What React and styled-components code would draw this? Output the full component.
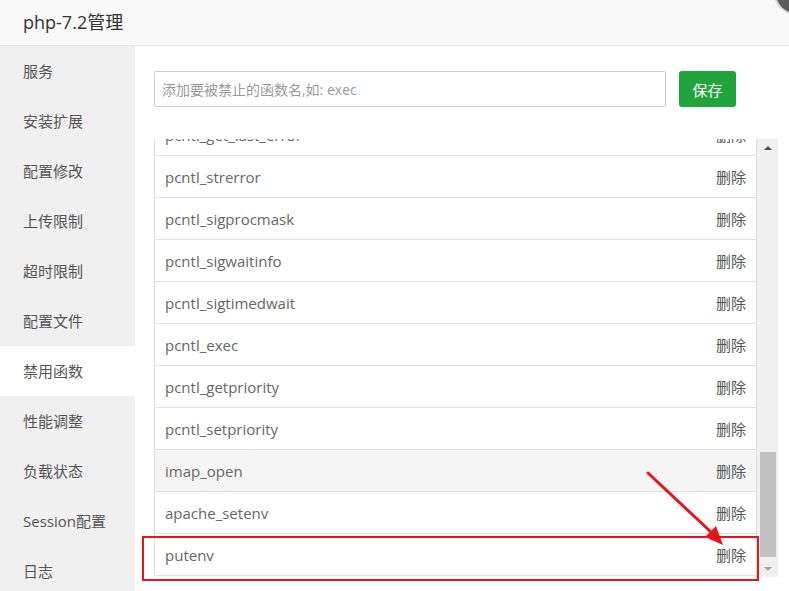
import React, { useLayoutEffect, useRef } from "react";
import styled, { createGlobalStyle } from "styled-components";

const GlobalStyle = createGlobalStyle`
  html, body {
    margin: 0;
    padding: 0;
    background: #fff;
  }
  body {
    font-family: "Open Sans", "Noto Sans CJK SC", sans-serif;
  }
  * {
    box-sizing: border-box;
  }
`;

const disabled = [
  "passthru", "exec", "system", "chroot", "chgrp", "chown", "shell_exec",
  "popen", "proc_open", "ini_alter", "ini_restore", "dl", "openlog",
  "syslog", "readlink", "symlink", "popepassthru", "pcntl_alarm",
  "pcntl_fork", "pcntl_waitpid", "pcntl_wait", "pcntl_wifexited",
  "pcntl_wifstopped", "pcntl_wifsignaled", "pcntl_wifcontinued",
  "pcntl_wexitstatus", "pcntl_wtermsig", "pcntl_wstopsig", "pcntl_signal",
  "pcntl_get_last_error", "pcntl_strerror",
  "pcntl_sigprocmask", "pcntl_sigwaitinfo", "pcntl_sigtimedwait",
  "pcntl_exec", "pcntl_getpriority", "pcntl_setpriority", "imap_open",
  "apache_setenv", "putenv",
];

const menu = [
  "服务", "安装扩展", "配置修改", "上传限制", "超时限制", "配置文件",
  "禁用函数", "性能调整", "负载状态", "Session配置", "日志",
];

const ROW_H = 42;
const VIEW_H = 438;
const ARROW_H = 17;

const Layer = styled.div`
  position: relative;
  width: 789px;
  height: 591px;
  overflow: hidden;
  background: #fff;
`;

const Header = styled.div`
  height: 46px;
  line-height: 45px;
  padding-left: 23px;
  font-size: 18px;
  color: #333;
  background: #f8f8f8;
  border-bottom: 1px solid #e5e5e5;
`;

const CloseDot = styled.div`
  position: absolute;
  left: 776px;
  top: -27px;
  width: 40px;
  height: 40px;
  border-radius: 50%;
  background: #5b5b5b;
  box-shadow: 0 0 0 2px #d6d6d6;
`;

const Body = styled.div`
  display: flex;
  height: 545px;
`;

const Sidebar = styled.div`
  width: 135px;
  flex-shrink: 0;
  background: #f0f0f0;
`;

const MenuItem = styled.div`
  height: 50px;
  line-height: 50px;
  padding-left: 23px;
  font-size: 15px;
  color: #555;
  white-space: nowrap;
  background: ${(p) => (p.$active ? "#fff" : "transparent")};
`;

const Content = styled.div`
  flex: 1;
  padding: 25px 12px 0 19px;
`;

const AddRow = styled.div`
  display: flex;
  align-items: center;
  gap: 13px;
`;

const Input = styled.input`
  width: 512px;
  height: 36px;
  padding: 0 7px;
  border: 1px solid #ccc;
  border-radius: 2px;
  font-family: inherit;
  font-size: 14px;
  color: #555;
  outline: none;
  &::placeholder {
    color: #999;
  }
`;

const SaveButton = styled.button`
  width: 57px;
  height: 36px;
  border: none;
  border-radius: 3px;
  background: #20a53a;
  color: #fff;
  font-family: inherit;
  font-size: 15px;
  padding: 0;
`;

const ListBox = styled.div`
  display: flex;
  margin-top: 32px;
  width: 624px;
  height: ${VIEW_H}px;
`;

const Viewport = styled.div`
  width: 603px;
  height: 100%;
  overflow: hidden;
`;

const Table = styled.div`
  border-left: 1px solid #ddd;
  border-right: 1px solid #ddd;
  padding-bottom: 1px;
`;

const Row = styled.div`
  display: flex;
  align-items: center;
  justify-content: space-between;
  height: ${ROW_H}px;
  padding: 0 10px;
  border-bottom: 1px solid #e0e0e0;
  font-size: 15px;
  color: #666;
  background: ${(p) => (p.$hover ? "#f5f5f5" : "#fff")};
`;

const Delete = styled.span`
  color: #555;
  font-size: 15px;
`;

const ScrollBar = styled.div`
  width: 21px;
  height: 100%;
  display: flex;
  flex-direction: column;
  background: #f0f0f0;
`;

const Arrow = styled.div`
  height: ${ARROW_H}px;
  display: flex;
  align-items: center;
  justify-content: center;
  padding-left: 1px;
  &::before {
    content: "";
    width: 0;
    height: 0;
    border-left: 4px solid transparent;
    border-right: 4px solid transparent;
    ${(p) =>
      p.$down
        ? "border-top: 4px solid #a3a3a3;"
        : "border-bottom: 4px solid #505050;"}
  }
`;

const Track = styled.div`
  flex: 1;
  display: flex;
  flex-direction: column;
  justify-content: flex-end;
  padding: 0 2px 3px 3px;
`;

const Thumb = styled.div`
  background: #c1c1c1;
`;

const Highlight = styled.div`
  position: absolute;
  left: 142px;
  top: 536px;
  width: 617px;
  height: 45px;
  border: 2px solid #e8141c;
  pointer-events: none;
`;

const Annotation = styled.svg`
  position: absolute;
  left: 0;
  top: 0;
  pointer-events: none;
`;

export default function App() {
  const viewRef = useRef(null);

  useLayoutEffect(() => {
    const el = viewRef.current;
    if (el) el.scrollTop = el.scrollHeight;
  }, []);

  const contentH = disabled.length * ROW_H + 1;
  const trackH = VIEW_H - ARROW_H * 2;
  const thumbH = Math.round((trackH * VIEW_H) / contentH);

  return (
    <Layer>
      <GlobalStyle />
      <Header>php-7.2管理</Header>
      <CloseDot />
      <Body>
        <Sidebar>
          {menu.map((item) => (
            <MenuItem key={item} $active={item === "禁用函数"}>
              {item}
            </MenuItem>
          ))}
        </Sidebar>
        <Content>
          <AddRow>
            <Input placeholder="添加要被禁止的函数名,如: exec" />
            <SaveButton>保存</SaveButton>
          </AddRow>
          <ListBox>
            <Viewport ref={viewRef}>
              <Table>
                {disabled.map((fn, i) => (
                  <Row key={fn + i} $hover={fn === "imap_open"}>
                    <span>{fn}</span>
                    <Delete>删除</Delete>
                  </Row>
                ))}
              </Table>
            </Viewport>
            <ScrollBar>
              <Arrow />
              <Track>
                <Thumb style={{ height: thumbH }} />
              </Track>
              <Arrow $down />
            </ScrollBar>
          </ListBox>
        </Content>
      </Body>
      <Highlight />
      <Annotation width="789" height="591" viewBox="0 0 789 591">
        <line x1="648" y1="473" x2="712" y2="533" stroke="#e8141c" strokeWidth="3" strokeLinecap="round" />
        <polygon points="723,545 705,537 716,526" fill="#e8141c" />
      </Annotation>
    </Layer>
  );
}
